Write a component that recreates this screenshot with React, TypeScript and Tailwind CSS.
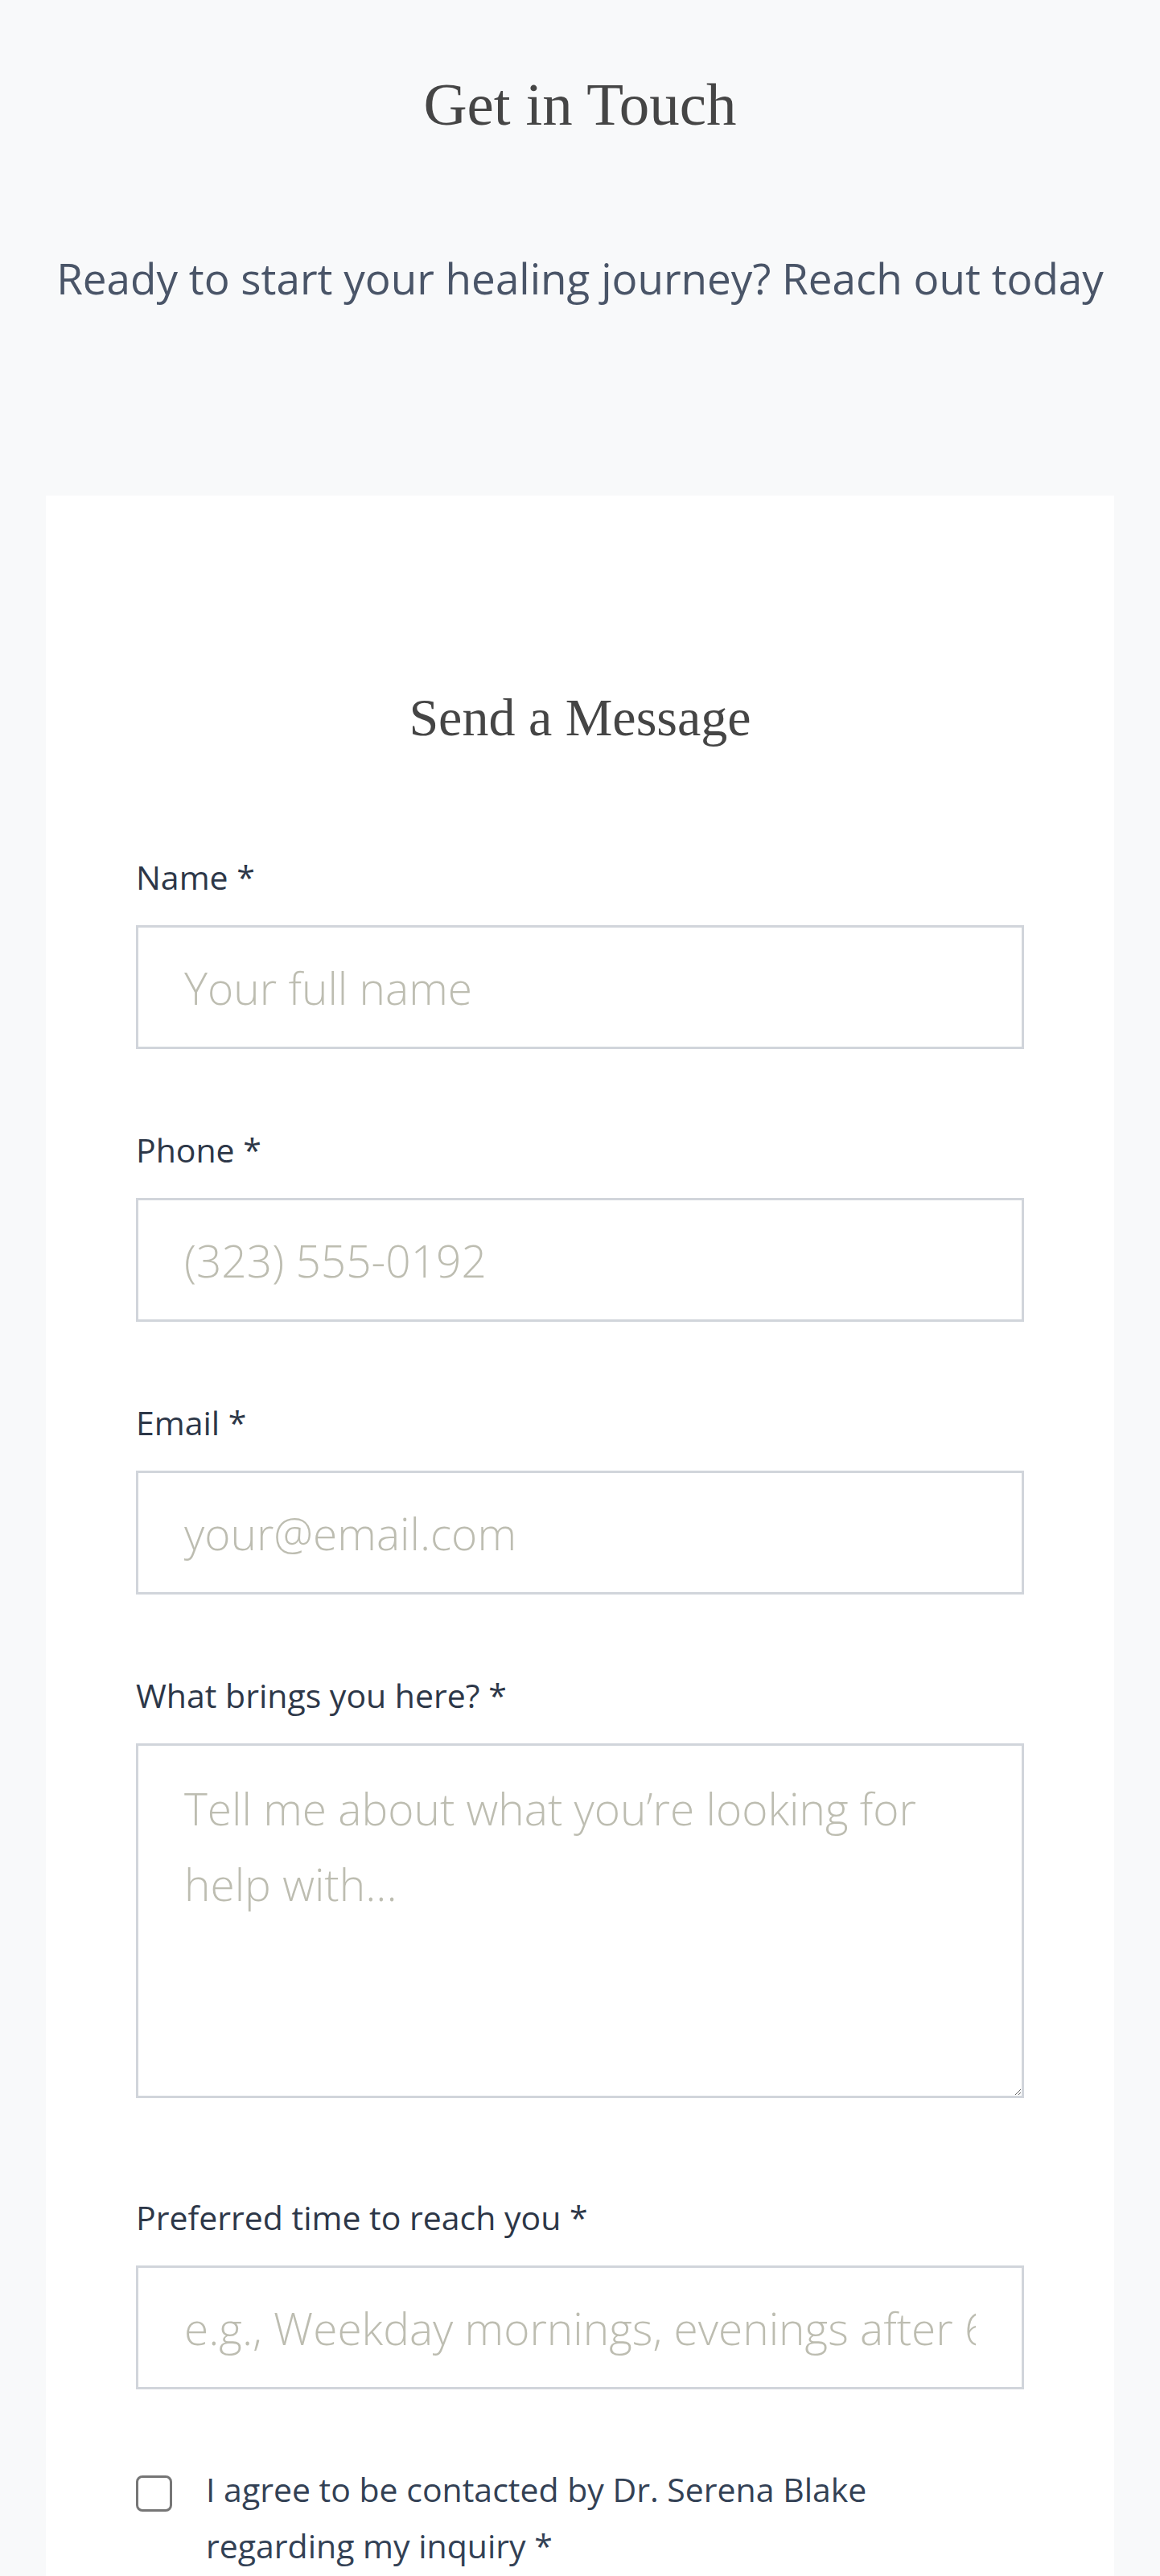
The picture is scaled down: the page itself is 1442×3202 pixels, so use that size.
import React from "react";

const serif = { fontFamily: '"Liberation Serif", "Times New Roman", serif' };

function Label({ children }: { children: React.ReactNode }) {
  return (
    <label className="block text-[41px] leading-[60px] text-[#2d3748] mb-[30px]">{children}</label>
  );
}

const inputCls =
  "block w-full h-[154px] border-[3px] border-[#d1d5db] bg-white px-[57px] text-[55px] font-light text-[#2d3748] placeholder:text-[#bdbdb1] outline-none";

export default function App() {
  return (
    <div
      className="min-h-screen bg-[#f8f9fa] px-[57px] pt-[85px]"
      style={{ fontFamily: '"Open Sans", "Liberation Sans", sans-serif' }}
    >
      <h1 className="text-center text-[75px] leading-[89px] font-normal text-[#454545]" style={serif}>
        Get in Touch
      </h1>
      <p className="mt-[134px] text-center text-[53px] leading-[75px] font-normal text-[#4a5568]">
        Ready to start your healing journey? Reach out today
      </p>

      <div className="mt-[233px] bg-white px-[112px] pt-[236px] pb-[300px]">
        <h2 className="text-center text-[66px] leading-[79px] font-normal text-[#454545]" style={serif}>
          Send a Message
        </h2>

        <form className="mt-[129px]" onSubmit={(e) => e.preventDefault()}>
          <div className="mb-[95px]">
            <Label>Name *</Label>
            <input className={inputCls} placeholder="Your full name" />
          </div>
          <div className="mb-[95px]">
            <Label>Phone *</Label>
            <input className={inputCls} placeholder="(323) 555-0192" />
          </div>
          <div className="mb-[95px]">
            <Label>Email *</Label>
            <input className={inputCls} placeholder="your@email.com" />
          </div>
          <div className="mb-[118px]">
            <Label>What brings you here? *</Label>
            <textarea
              className="block w-full h-[441px] border-[3px] border-[#d1d5db] bg-white px-[57px] pt-[31px] text-[55px] leading-[94px] font-light text-[#2d3748] placeholder:text-[#bdbdb1] outline-none"
              placeholder="Tell me about what you’re looking for help with..."
            />
          </div>
          <div className="mb-[89px]">
            <Label>Preferred time to reach you *</Label>
            <input className={inputCls} placeholder="e.g., Weekday mornings, evenings after 6pm" />
          </div>
          <div className="flex items-start gap-[42px]">
            <input
              type="checkbox"
              className="mt-[18px] h-[45px] w-[45px] shrink-0 appearance-none rounded-[8px] border-[3px] border-[#767676] bg-white"
            />
            <span className="max-w-[960px] text-[41px] leading-[70px] text-[#334155]">
              I agree to be contacted by Dr. Serena Blake regarding my inquiry *
            </span>
          </div>
        </form>
      </div>
    </div>
  );
}
